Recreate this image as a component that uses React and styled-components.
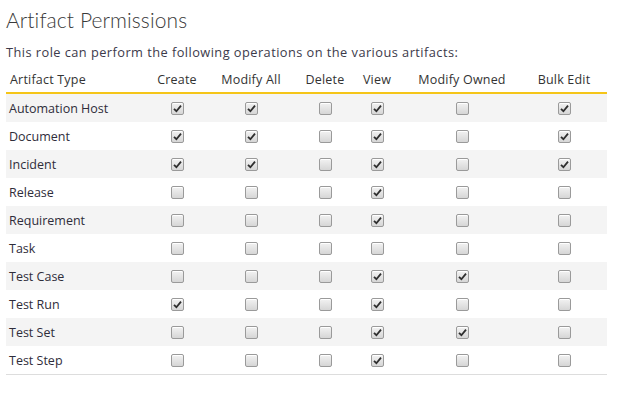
import React from 'react';
import styled, { createGlobalStyle } from 'styled-components';

const GlobalStyle = createGlobalStyle`
  html, body {
    margin: 0;
    padding: 0;
    background: #ffffff;
  }
  body {
    font-family: "Open Sans", "Noto Sans", sans-serif;
    color: #333333;
  }
`;

const COLUMNS = ['Create', 'Modify All', 'Delete', 'View', 'Modify Owned', 'Bulk Edit'];

const ROWS = [
  { name: 'Automation Host', perms: [1, 1, 0, 1, 0, 1] },
  { name: 'Document', perms: [1, 1, 0, 1, 0, 1] },
  { name: 'Incident', perms: [1, 1, 0, 1, 0, 1] },
  { name: 'Release', perms: [0, 0, 0, 1, 0, 0] },
  { name: 'Requirement', perms: [0, 0, 0, 1, 0, 0] },
  { name: 'Task', perms: [0, 0, 0, 0, 0, 0] },
  { name: 'Test Case', perms: [0, 0, 0, 1, 1, 0] },
  { name: 'Test Run', perms: [1, 0, 0, 1, 0, 0] },
  { name: 'Test Set', perms: [0, 0, 0, 1, 1, 0] },
  { name: 'Test Step', perms: [0, 0, 0, 1, 0, 0] },
];

const Page = styled.div`
  padding: 6px 16px 0 6px;
`;

const Title = styled.h2`
  margin: 0;
  font-family: "Lato", "Open Sans", sans-serif;
  font-weight: 300;
  font-size: 21px;
  line-height: 28px;
  color: #3a3a3a;
  letter-spacing: 0.1px;
`;

const Intro = styled.p`
  margin: 9px 0 0 0;
  font-size: 12.8px;
  line-height: 18px;
  letter-spacing: 0.45px;
  color: #3c3a4a;
`;

const Grid = styled.div`
  margin-top: 6px;
  display: grid;
  grid-template-columns: 145px 52px 96px 52px 52px 118px 86px;
  border-bottom: 1px solid #dddddd;
`;

const HeadCell = styled.div`
  height: 25px;
  display: flex;
  align-items: center;
  justify-content: ${(p) => (p.$left ? 'flex-start' : 'center')};
  padding-left: ${(p) => (p.$left ? '4px' : '0')};
  white-space: nowrap;
  font-size: 12.5px;
  letter-spacing: 0.2px;
  color: #333333;
  border-bottom: 2px solid #f5c518;
`;

const Cell = styled.div`
  height: 28px;
  display: flex;
  align-items: center;
  justify-content: ${(p) => (p.$left ? 'flex-start' : 'center')};
  padding-left: ${(p) => (p.$left ? '3px' : '0')};
  background: ${(p) => (p.$striped ? '#f4f4f4' : '#ffffff')};
  font-size: 12.5px;
  color: #2f2d3a;
  white-space: nowrap;
`;

const Box = styled.span`
  width: 11px;
  height: 11px;
  border: 1px solid #9a9a9a;
  border-radius: 2px;
  background: linear-gradient(#f2f2f2, #d6d6d6);
  box-shadow: inset 0 1px 0 #ffffff;
  display: flex;
  align-items: center;
  justify-content: center;
`;

const Check = ({ on }) => (
  <Box>
    {on ? (
      <svg width="9" height="9" viewBox="0 0 9 9">
        <path d="M1 4.8 L3.4 7.2 L8 1.6" fill="none" stroke="#2e2e2e" strokeWidth="1.8" />
      </svg>
    ) : null}
  </Box>
);

export default function App() {
  return (
    <Page>
      <GlobalStyle />
      <Title>Artifact Permissions</Title>
      <Intro>This role can perform the following operations on the various artifacts:</Intro>
      <Grid>
        <HeadCell $left>Artifact Type</HeadCell>
        {COLUMNS.map((c) => (
          <HeadCell key={c}>{c}</HeadCell>
        ))}
        {ROWS.map((row, i) => (
          <React.Fragment key={row.name}>
            <Cell $left $striped={i % 2 === 0}>{row.name}</Cell>
            {row.perms.map((on, j) => (
              <Cell key={j} $striped={i % 2 === 0}>
                <Check on={on} />
              </Cell>
            ))}
          </React.Fragment>
        ))}
      </Grid>
    </Page>
  );
}
